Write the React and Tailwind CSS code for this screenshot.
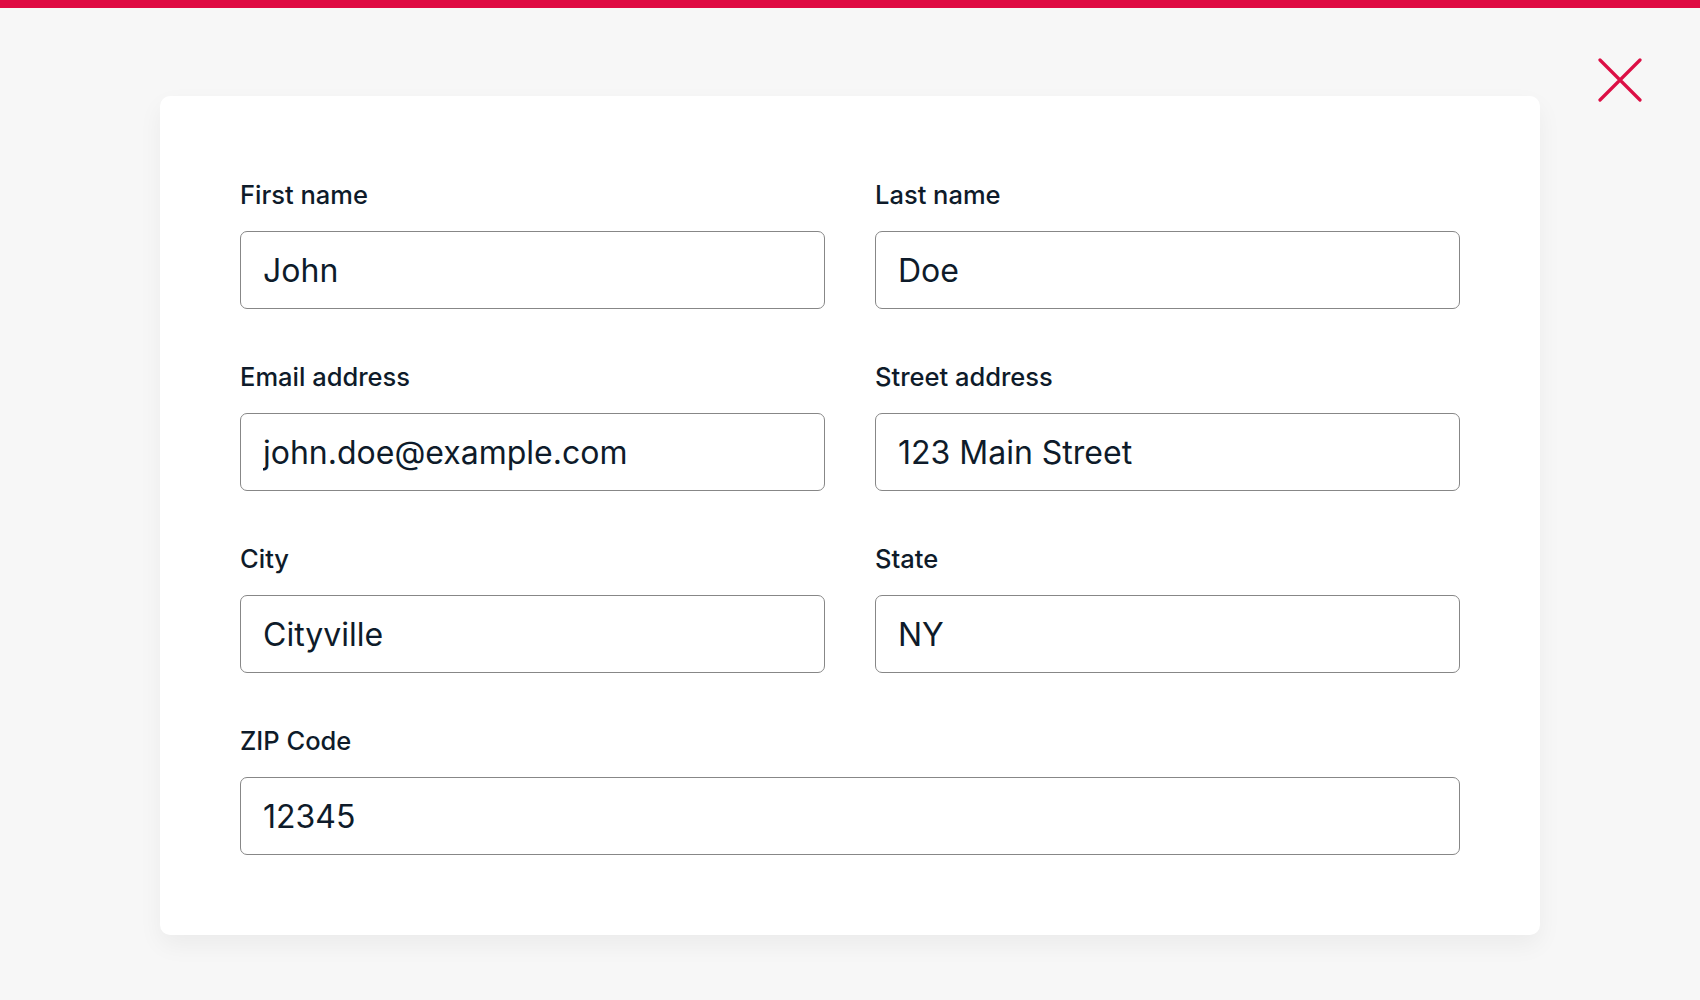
import { useState } from "react";

const fields = [
    { id: "firstName", label: "First name", value: "John" },
    { id: "lastName", label: "Last name", value: "Doe" },
    { id: "email", label: "Email address", value: "john.doe@example.com" },
    { id: "street", label: "Street address", value: "123 Main Street" },
    { id: "city", label: "City", value: "Cityville" },
    { id: "state", label: "State", value: "NY" },
    { id: "zip", label: "ZIP Code", value: "12345", wide: true },
];

const inputClass =
    "h-[78px] w-full rounded-[7px] border-[1.5px] border-[#878787] bg-white px-[22px] text-[32px] font-normal text-[#0e1b2a] outline-none";

const CloseIcon = () => (
    <svg width="44" height="44" viewBox="0 0 44 44" fill="none">
        <path d="M2 2L42 42M42 2L2 42" stroke="#dc0f45" strokeWidth="3.2" strokeLinecap="round" />
    </svg>
);

const App = () => {
    const [values, setValues] = useState(
        Object.fromEntries(fields.map((f) => [f.id, f.value]))
    );

    return (
        <div className="min-h-screen bg-[#f7f7f7] font-['Inter',sans-serif]">
            {/* Top accent strip */}
            <div className="h-2 bg-[#df0b43]" />

            <div className="flex items-start pl-40 pr-[58px] pt-[50px]">
                {/* Form card */}
                <div className="mt-[38px] w-[1380px] rounded-[10px] bg-white px-20 pb-20 pt-[83px] shadow-[0_10px_24px_rgba(0,0,0,0.05)]">
                    <form className="grid grid-cols-2 gap-x-[50px] gap-y-[52px]">
                        {fields.map((f) => (
                            <div key={f.id} className={f.wide ? "col-span-2" : ""}>
                                <label
                                    htmlFor={f.id}
                                    className="mb-5 block text-[25.5px] font-medium leading-[32px] text-[#0e1b2a]"
                                >
                                    {f.label}
                                </label>
                                <input
                                    id={f.id}
                                    type="text"
                                    value={values[f.id]}
                                    onChange={(e) => setValues((v) => ({ ...v, [f.id]: e.target.value }))}
                                    className={inputClass}
                                />
                            </div>
                        ))}
                    </form>
                </div>

                <button type="button" aria-label="Close" className="ml-auto">
                    <CloseIcon />
                </button>
            </div>
        </div>
    );
};

export default App;
